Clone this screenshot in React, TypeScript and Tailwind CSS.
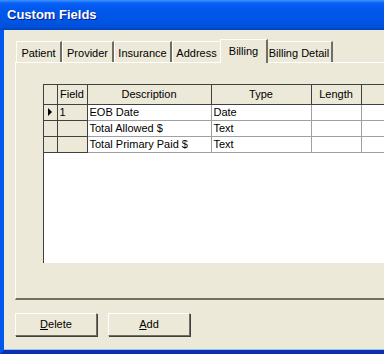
import React from "react";

const tabs = [
  { label: "Patient", w: "w-[46px]" },
  { label: "Provider", w: "w-[52px]" },
  { label: "Insurance", w: "w-[58px]" },
  { label: "Address", w: "w-[50px]" },
  { label: "Billing", w: "w-[48px]" },
  { label: "Billing Detail", w: "w-[67px]" },
];

const rows = [
  { field: "1", desc: "EOB Date", type: "Date", current: true },
  { field: "", desc: "Total Allowed $", type: "Text", current: false },
  { field: "", desc: "Total Primary Paid $", type: "Text", current: false },
];

function Tab({ label, w, active }: { label: string; w: string; active: boolean }) {
  if (active) {
    return (
      <div className={`relative z-10 -mx-[2px] -mb-px flex h-[24px] items-start justify-center border-l border-t border-white border-r-2 border-r-[#716F64] bg-[#ECE9D8] pt-[3px] ${w}`}>
        {label}
      </div>
    );
  }
  return (
    <div className={`flex h-[21px] items-start justify-center border-l border-t border-white border-r-2 border-r-[#716F64] bg-[#ECE9D8] pt-[3px] ${w}`}>
      {label}
    </div>
  );
}

function Button({ label }: { label: string }) {
  return (
    <button className="flex h-[23px] w-[82px] items-center justify-center border border-t-white border-l-white border-r-[#716F64] border-b-[#716F64] bg-[#ECE9D8] text-[11px] shadow-[1px_1px_0_#404040]">
      <span className="underline underline-offset-1">{label[0]}</span>
      {label.slice(1)}
    </button>
  );
}

export default function App() {
  return (
    <div
      className="flex h-[354px] w-[384px] flex-col overflow-hidden bg-[#0A3FD0] text-black"
      style={{ fontFamily: '"Liberation Sans", Arial, sans-serif' }}
    >
      {/* Title bar */}
      <div className="flex h-[30px] items-center bg-[linear-gradient(to_bottom,#3D95FF_0px,#0A61F5_3px,#0058EE_8px,#0055E5_20px,#0050DA_27px,#0041C0_30px)] pl-[7px]">
        <span className="text-[13px] font-bold text-white [text-shadow:1px_1px_0_#0A1E8A]">
          Custom Fields
        </span>
      </div>

      <div className="flex flex-1 flex-col border-l-4 border-l-[#0058EE] border-b-[4px] border-b-[#0A2FB0]">
        <div className="flex flex-1 flex-col border-b border-b-[#9CC0F0] bg-[#ECE9D8]">
          {/* Tabs */}
          <div className="ml-[12px] mt-[8px] flex h-[24px] items-end text-[11px]">
            {tabs.map((t) => (
              <Tab key={t.label} label={t.label} w={t.w} active={t.label === "Billing"} />
            ))}
          </div>

          {/* Tab panel */}
          <div className="ml-[11px] h-[238px] border-l border-t border-white border-b-2 border-b-[#716F64] pl-[27px] pt-[21px]">
            <div className="h-[179px] overflow-hidden border-l border-t border-[#404040] bg-white">
              <table className="w-[377px] table-fixed border-collapse text-[11px] leading-none">
                <colgroup>
                  <col className="w-[13px]" />
                  <col className="w-[30px]" />
                  <col className="w-[124px]" />
                  <col className="w-[100px]" />
                  <col className="w-[50px]" />
                  <col className="w-[60px]" />
                </colgroup>
                <thead>
                  <tr className="h-[19px] bg-[#ECE9D8]">
                    <th className="w-[13px] border border-[#404040] border-t-0 border-l-0 font-normal"></th>
                    <th className="w-[30px] border border-[#404040] border-t-0 font-normal">Field</th>
                    <th className="w-[124px] border border-[#404040] border-t-0 font-normal">Description</th>
                    <th className="w-[100px] border border-[#404040] border-t-0 font-normal">Type</th>
                    <th className="w-[50px] border border-[#404040] border-t-0 font-normal">Length</th>
                    <th className="w-[60px] border border-[#404040] border-t-0 border-r-0 font-normal"></th>
                  </tr>
                </thead>
                <tbody>
                  {rows.map((r) => (
                    <tr key={r.desc} className="h-[16px]">
                      <td className="border border-[#404040] border-l-0 bg-[#ECE9D8] p-0">
                        {r.current && (
                          <svg width="12" height="14" viewBox="0 0 12 14" className="block">
                            <path d="M4 3 L8 7 L4 11 Z" fill="#000" />
                          </svg>
                        )}
                      </td>
                      <td className="border border-[#404040] bg-[#ECE9D8] pl-[2px] text-left">{r.field}</td>
                      <td className="border border-[#A0A0A0] pl-[2px] text-left">{r.desc}</td>
                      <td className="border border-[#A0A0A0] pl-[2px] text-left">{r.type}</td>
                      <td className="border border-[#A0A0A0]"></td>
                      <td className="border border-[#A0A0A0] border-r-0"></td>
                    </tr>
                  ))}
                </tbody>
              </table>
            </div>
          </div>

          {/* Buttons */}
          <div className="ml-[11px] mt-[13px] flex gap-[11px]">
            <Button label="Delete" />
            <Button label="Add" />
          </div>
        </div>
      </div>
    </div>
  );
}
